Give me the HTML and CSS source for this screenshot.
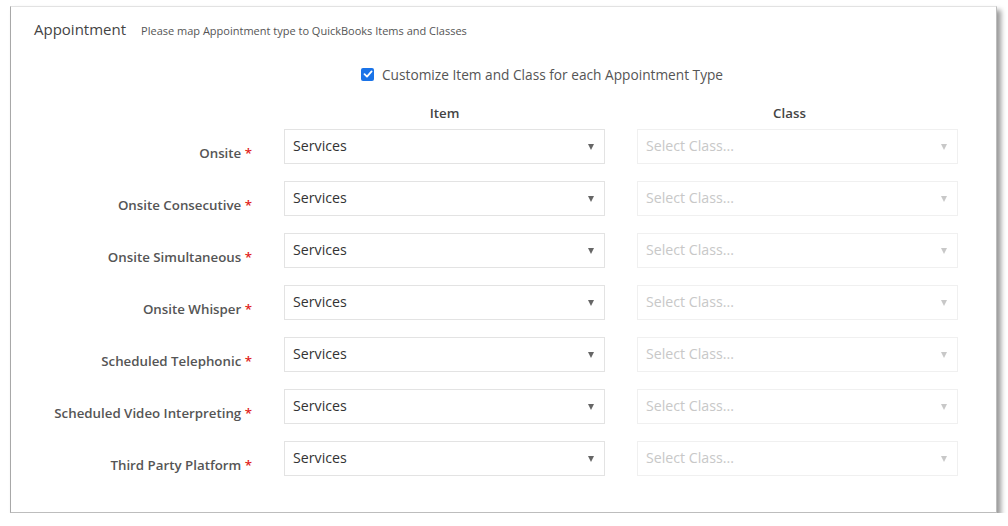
FILE: index.html
```html
<!DOCTYPE html>
<html>
<head>
<meta charset="utf-8">
<link rel="stylesheet" href="styles.css">
</head>
<body>
<div class="frame">
  <div class="header">
    <span class="title">Appointment</span>
    <span class="subtitle">Please map Appointment type to QuickBooks Items and Classes</span>
  </div>
  <div class="check-row">
    <span class="checkbox"><svg width="10" height="10" viewBox="0 0 10 10"><path d="M1.5 5.2 L4 7.6 L8.6 2.4" fill="none" stroke="#fff" stroke-width="1.8" stroke-linecap="round" stroke-linejoin="round"/></svg></span>
    <span class="check-label">Customize Item and Class for each Appointment Type</span>
  </div>
  <div class="grid">
    <div></div>
    <div class="col-head">Item</div>
    <div class="col-head class-head">Class</div>

    <div class="label">Onsite <span class="req">*</span></div>
    <div class="select"><span>Services</span><span class="arrow"></span></div>
    <div class="select disabled"><span>Select Class...</span><span class="arrow"></span></div>

    <div class="label">Onsite Consecutive <span class="req">*</span></div>
    <div class="select"><span>Services</span><span class="arrow"></span></div>
    <div class="select disabled"><span>Select Class...</span><span class="arrow"></span></div>

    <div class="label">Onsite Simultaneous <span class="req">*</span></div>
    <div class="select"><span>Services</span><span class="arrow"></span></div>
    <div class="select disabled"><span>Select Class...</span><span class="arrow"></span></div>

    <div class="label">Onsite Whisper <span class="req">*</span></div>
    <div class="select"><span>Services</span><span class="arrow"></span></div>
    <div class="select disabled"><span>Select Class...</span><span class="arrow"></span></div>

    <div class="label">Scheduled Telephonic <span class="req">*</span></div>
    <div class="select"><span>Services</span><span class="arrow"></span></div>
    <div class="select disabled"><span>Select Class...</span><span class="arrow"></span></div>

    <div class="label">Scheduled Video Interpreting <span class="req">*</span></div>
    <div class="select"><span>Services</span><span class="arrow"></span></div>
    <div class="select disabled"><span>Select Class...</span><span class="arrow"></span></div>

    <div class="label">Third Party Platform <span class="req">*</span></div>
    <div class="select"><span>Services</span><span class="arrow"></span></div>
    <div class="select disabled"><span>Select Class...</span><span class="arrow"></span></div>
  </div>
</div>
</body>
</html>
```
FILE: styles.css
```css
html, body {
  margin: 0;
  padding: 0;
  background: #fff;
}
body {
  font-family: "Open Sans", "Noto Sans", sans-serif;
  color: #333;
}
.frame {
  box-sizing: border-box;
  margin: 6px 0 0 10px;
  width: 987px;
  height: 507px;
  border-top: 1px solid #e2e2e2;
  border-left: 1px solid #a8a8a8;
  border-right: 1px solid #bdbdbd;
  border-bottom: 1px solid #bdbdbd;
  box-shadow: 4px 4px 5px rgba(0,0,0,0.4);
  background: #fff;
}
.header {
  display: flex;
  align-items: baseline;
  padding: 12px 0 0 23px;
  height: 24px;
}
.title {
  font-size: 15px;
  color: #444;
}
.subtitle {
  font-size: 11px;
  color: #555;
  margin-left: 15px;
}
.check-row {
  display: flex;
  align-items: center;
  margin: 22px 0 0 350px;
  height: 18px;
}
.checkbox {
  width: 13px;
  height: 13px;
  border-radius: 2px;
  background: #1a73e8;
  display: flex;
  align-items: center;
  justify-content: center;
}
.check-label {
  font-size: 13.7px;
  color: #555;
  margin-left: 8px;
}
.grid {
  display: grid;
  grid-template-columns: 241px 321px 321px;
  column-gap: 32px;
  row-gap: 17px;
  margin-top: 21px;
}
.grid .col-head {
  font-size: 13.3px;
  font-weight: 600;
  color: #444;
  text-align: center;
  height: 18px;
  line-height: 18px;
  margin-bottom: -10px;
}
.class-head {
  padding-right: 16px;
}
.label {
  font-size: 13.3px;
  font-weight: 600;
  color: #555;
  text-align: right;
  padding-top: 15px;
  line-height: 18px;
}
.req {
  color: #e02020;
}
.select {
  box-sizing: border-box;
  height: 35px;
  border: 1px solid #e3e3e3;
  display: flex;
  align-items: center;
  justify-content: space-between;
  padding: 0 10px 0 8px;
  font-size: 14.2px;
  color: #333;
}
.select > span:first-child {
  margin-top: -2px;
}
.arrow {
  width: 0;
  height: 0;
  border-left: 3.5px solid transparent;
  border-right: 3.5px solid transparent;
  border-top: 6px solid #666;
}
.select.disabled {
  border-color: #f0f0f0;
  color: #c8c8c8;
}
.select.disabled .arrow {
  border-top-color: #c8c8c8;
}
```
